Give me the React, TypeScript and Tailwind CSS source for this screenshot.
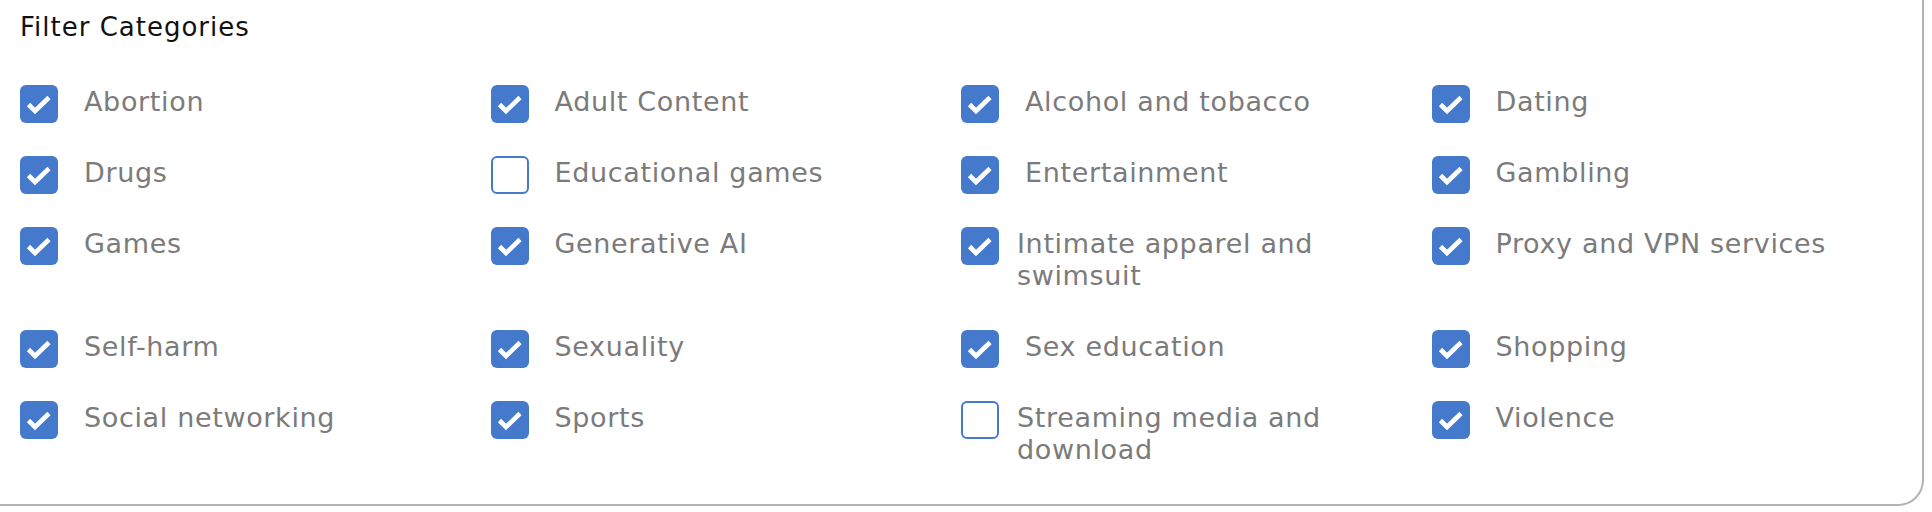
import React from "react";

interface Category {
  name: string;
  checked: boolean;
  wrap?: boolean;
}

const categories: Category[] = [
  { name: "Abortion", checked: true },
  { name: "Adult Content", checked: true },
  { name: "Alcohol and tobacco", checked: true },
  { name: "Dating", checked: true },
  { name: "Drugs", checked: true },
  { name: "Educational games", checked: false },
  { name: "Entertainment", checked: true },
  { name: "Gambling", checked: true },
  { name: "Games", checked: true },
  { name: "Generative AI", checked: true },
  { name: "Intimate apparel and swimsuit", checked: true, wrap: true },
  { name: "Proxy and VPN services", checked: true },
  { name: "Self-harm", checked: true },
  { name: "Sexuality", checked: true },
  { name: "Sex education", checked: true },
  { name: "Shopping", checked: true },
  { name: "Social networking", checked: true },
  { name: "Sports", checked: true },
  { name: "Streaming media and download", checked: false, wrap: true },
  { name: "Violence", checked: true },
];

function Checkbox({ checked }: { checked: boolean }) {
  if (!checked) {
    return (
      <div className="w-[38px] h-[38px] shrink-0 rounded-[6px] border-2 border-[#4479cc] bg-white" />
    );
  }
  return (
    <div className="w-[38px] h-[38px] shrink-0 rounded-[6px] bg-[#4479cc] flex items-center justify-center">
      <svg width="38" height="38" viewBox="0 0 38 38" fill="none">
        <path
          d="M8.5 19.5 L15 26 L29 12.5"
          stroke="white"
          strokeWidth="4.6"
          strokeLinecap="butt"
          strokeLinejoin="miter"
        />
      </svg>
    </div>
  );
}

export default function App() {
  return (
    <div className="w-[1932px] h-[512px] bg-white">
      <div
        className="w-[1924px] h-[506px] bg-white border-r-2 border-b-2 border-[#b3b3b3] rounded-br-[26px] px-[20px] pt-[11px]"
        style={{ fontFamily: '"DejaVu Sans", sans-serif' }}
      >
        <h2 className="text-[26px] leading-[32px] tracking-[1px] text-[#111111] font-normal">
          Filter Categories
        </h2>
        <div className="grid grid-cols-4 gap-y-[33px] mt-[42px]">
          {categories.map((c) => (
            <div key={c.name} className="flex items-start">
              <Checkbox checked={c.checked} />
              <span
                className={
                  "text-[27px] leading-[32px] tracking-[0.65px] text-[#7b7b7b] pt-[1px] pb-[5px] pr-[40px] " +
                  (c.wrap ? "ml-[18px]" : "ml-[26px]")
                }
              >
                {c.name}
              </span>
            </div>
          ))}
        </div>
      </div>
    </div>
  );
}
